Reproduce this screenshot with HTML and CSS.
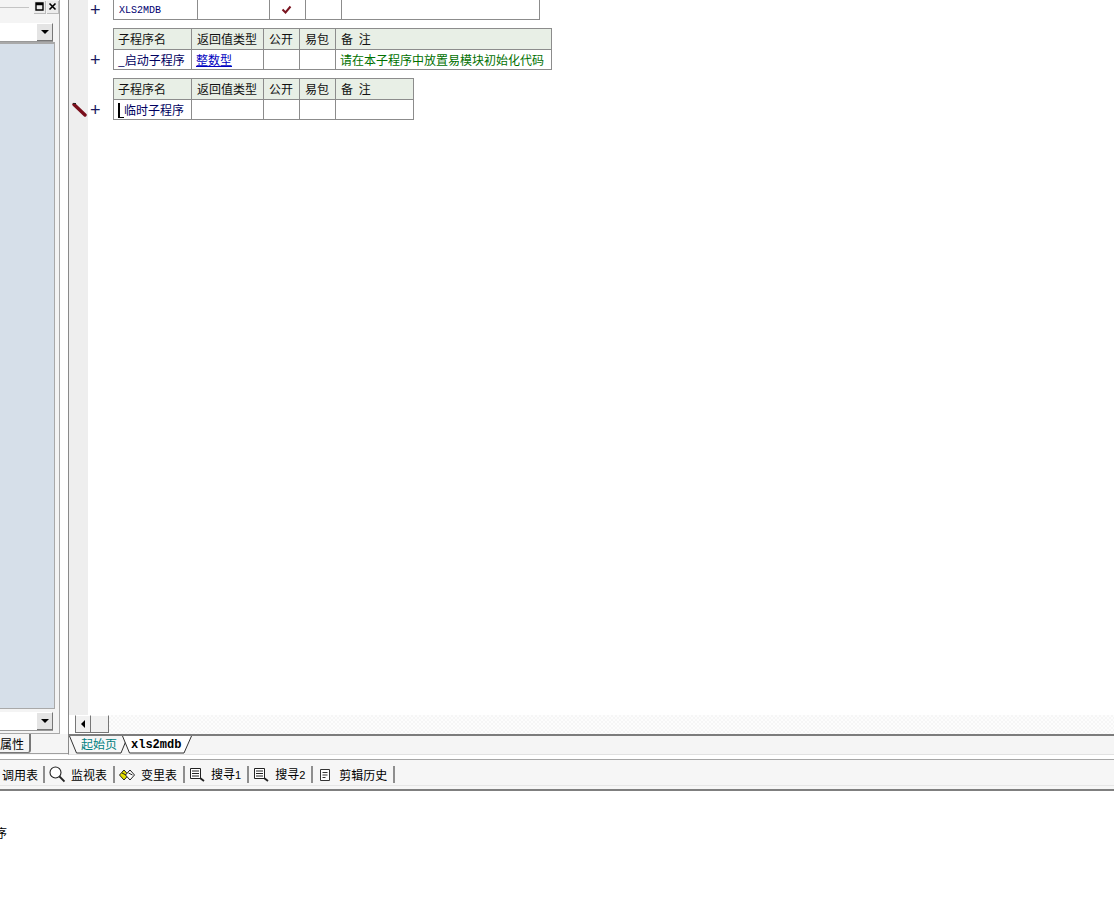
FILE: index.html
```html
<!DOCTYPE html>
<html lang="zh-CN">
<head>
  <meta charset="UTF-8">
  <title>易语言</title>
  <link rel="stylesheet" href="styles.css">
</head>
<body>
  <div class="main">
    <!-- left panel -->
    <div class="side">
      <div class="side-title">
        <span class="grip"></span>
        <span class="win-btn"><svg width="9" height="9" viewBox="0 0 9 9"><path d="M1 1h7v7H1z M1 2.500h7" fill="none" stroke="#000" stroke-width="1.400"/></svg></span>
        <span class="win-btn"><svg width="9" height="9" viewBox="0 0 9 9"><path d="M1.500 1.500l6 6M7.500 1.500l-6 6" fill="none" stroke="#000" stroke-width="1.600"/></svg></span>
      </div>
      <div class="combo top-combo"><span class="drop"><i class="arrow"></i></span></div>
      <div class="side-list"></div>
      <div class="combo bottom-combo"><span class="drop"><i class="arrow"></i></span></div>
    </div>

    <!-- editor -->
    <div class="editor">
      <div class="code">
        <div class="gutter">
          <div class="mark first-mark"><span class="plus">+</span></div>
          <div class="mark"><span class="plus">+</span></div>
          <div class="mark">
            <svg class="pencil" width="15" height="15" viewBox="0 0 15 15"><path d="M2 2.500L13 13" stroke="#7a0f1c" stroke-width="3.400" stroke-linecap="round"/><path d="M1 1.500l3 0" stroke="#222" stroke-width="1"/></svg>
            <span class="plus">+</span>
          </div>
        </div>
        <div class="subs">
          <table class="sub first-sub">
            <tr>
              <td class="c-name mono">XLS2MDB</td>
              <td class="c-type"></td>
              <td class="c-pub"><svg width="11" height="9" viewBox="0 0 11 9"><path d="M1.500 4.500l3 3 5-6" fill="none" stroke="#7a1420" stroke-width="2"/></svg></td>
              <td class="c-pkg"></td>
              <td class="c-note w1"></td>
            </tr>
          </table>
          <table class="sub">
            <tr class="head">
              <td class="c-name">子程序名</td>
              <td class="c-type">返回值类型</td>
              <td class="c-pub">公开</td>
              <td class="c-pkg">易包</td>
              <td class="c-note w2">备 注</td>
            </tr>
            <tr>
              <td class="name">_启动子程序</td>
              <td class="type">整数型</td>
              <td></td>
              <td></td>
              <td class="note">请在本子程序中放置易模块初始化代码</td>
            </tr>
          </table>
          <table class="sub">
            <tr class="head">
              <td class="c-name">子程序名</td>
              <td class="c-type">返回值类型</td>
              <td class="c-pub">公开</td>
              <td class="c-pkg">易包</td>
              <td class="c-note w3">备 注</td>
            </tr>
            <tr>
              <td class="name"><span class="caret"></span>临时子程序</td>
              <td></td>
              <td></td>
              <td></td>
              <td></td>
            </tr>
          </table>
        </div>
      </div>
      <div class="hscroll">
        <span class="sb-btn"><i class="arrow-left"></i></span>
        <span class="sb-thumb"></span>
        <span class="sb-track"></span>
      </div>
    </div>
  </div>

  <div class="strip">
    <div class="strip-left"><span class="side-tab">属性</span></div>
    <div class="strip-right">
      <svg class="doc-tabs" width="130" height="18" viewBox="0 0 130 18">
        <path d="M0.500 0L7.500 17H52L56.500 6" fill="#f8f8f8" stroke="#333"/>
        <path d="M53.500 0L60.500 17H115L122.500 0" fill="#fff" stroke="#333"/>
        <text x="12" y="12.500" class="tab-a">起始页</text>
        <text x="62" y="12" class="tab-b">xls2mdb</text>
      </svg>
    </div>
  </div>

  <div class="toolbar">
    <div class="tool first-tool"><span>调用表</span></div>
    <div class="tool">
      <svg width="16" height="17" viewBox="0 0 16 17"><circle cx="6.500" cy="6.500" r="5.500" fill="#fff" stroke="#222" stroke-width="1.100"/><path d="M10.500 10.500l5 5" stroke="#222" stroke-width="1.800"/></svg>
      <span>监视表</span>
    </div>
    <div class="tool">
      <svg width="16" height="14" viewBox="0 0 16 14"><path d="M5 2l4.500 5L5 12 .5 7z" fill="#e6e000" stroke="#222"/><path d="M11 2l4.500 5-4.500 5-4.500-5z" fill="#fff" stroke="#222"/><path d="M3 5l4 2M9.500 5l4 2" stroke="#222"/></svg>
      <span>变里表</span>
    </div>
    <div class="tool">
      <svg width="16" height="15" viewBox="0 0 16 15"><path d="M1.500 1.500h10v10h-10z" fill="#fff" stroke="#222"/><path d="M3 4h7M3 6.500h7M3 9h7" stroke="#222"/><path d="M11 11l4 3" stroke="#222" stroke-width="1.800"/></svg>
      <span>搜寻<em>1</em></span>
    </div>
    <div class="tool">
      <svg width="16" height="15" viewBox="0 0 16 15"><path d="M1.500 1.500h10v10h-10z" fill="#fff" stroke="#222"/><path d="M3 4h7M3 6.500h7M3 9h7" stroke="#222"/><path d="M11 11l4 3" stroke="#222" stroke-width="1.800"/></svg>
      <span>搜寻<em>2</em></span>
    </div>
    <div class="tool">
      <svg width="16" height="14" viewBox="-2 0 16 14"><path d="M1.500 1.500h9v11h-9z" fill="#fff" stroke="#333"/><path d="M3.500 4.500h5M3.500 7h5M3.500 9.500h3" stroke="#333"/></svg>
      <span>剪辑历史</span>
    </div>
  </div>

  <div class="output">
    <span class="out-line">序</span>
  </div>
</body>
</html>
```

FILE: styles.css
```css
html, body {
  margin: 0;
  padding: 0;
}
body {
  width: 1114px;
  height: 915px;
  overflow: hidden;
  background-color: #ffffff;
  font-family: "Noto Sans CJK SC", "Liberation Sans", sans-serif;
  font-size: 12px;
  color: #000;
}

.main {
  display: flex;
  height: 734px;
}

/* left panel */
.side {
  width: 60px;
  flex: none;
  display: flex;
  flex-direction: column;
  background-color: #f4f4f4;
  border-right: 1px solid #a8a8a8;
  border-bottom: 1px solid #a8a8a8;
  box-sizing: border-box;
}
.side-title {
  height: 14px;
  display: flex;
  align-items: center;
  gap: 1px;
}
.grip {
  flex: 1;
  height: 1px;
  margin-right: 4px;
  background-color: #c4c4c4;
}
.win-btn {
  width: 11px;
  height: 12px;
  display: flex;
  align-items: center;
  justify-content: center;
  background-color: #ececec;
  border-right: 1px solid #bbb;
  border-bottom: 1px solid #bbb;
}
.combo {
  height: 18px;
  width: 53px;
  background-color: #fff;
  display: flex;
  justify-content: flex-end;
  border-bottom: 1px solid #999;
}
.top-combo {
  margin-top: 9px;
}
.bottom-combo {
  margin-top: 3px;
  margin-bottom: 2px;
}
.drop {
  width: 15px;
  height: 16px;
  display: flex;
  align-items: center;
  justify-content: center;
  background-color: #e4e4e4;
  border-right: 1px solid #777;
  border-bottom: 1px solid #777;
  border-top: 1px solid #fff;
}
.arrow {
  border-left: 4px solid transparent;
  border-right: 4px solid transparent;
  border-top: 4px solid #000;
}
.side-list {
  width: 55px;
  flex: 1;
  background-color: #d6dfe9;
  border: 1px solid #a9a9a9;
  border-left: none;
  border-top-width: 2px;
  box-sizing: border-box;
}

/* editor */
.editor {
  flex: 1;
  display: flex;
  flex-direction: column;
  min-width: 0;
  margin-left: 8px;
  border-left: 1px solid #8a8a8a;
}
.code {
  flex: 1;
  display: flex;
  min-height: 0;
}
.gutter {
  width: 19px;
  flex: none;
  background-color: #eeeeee;
  position: relative;
}
.mark {
  height: 20px;
  margin-top: 30px;
  line-height: 19px;
  position: relative;
}
.first-mark {
  margin-top: 0;
}
.plus {
  position: absolute;
  left: 21px;
  top: 1px;
  font-family: "Liberation Sans", sans-serif;
  font-size: 18px;
  line-height: 19px;
  color: #1a1a60;
}
.pencil {
  position: absolute;
  left: 3px;
  top: 2px;
}
.subs {
  padding-left: 25px;
  display: flex;
  flex-direction: column;
  gap: 8px;
}

table.sub {
  border-collapse: separate;
  border-spacing: 0;
  table-layout: fixed;
  width: min-content;
  border-top: 1px solid #8c8c8c;
  border-left: 1px solid #8c8c8c;
}
.sub td {
  border-right: 1px solid #8c8c8c;
  border-bottom: 1px solid #8c8c8c;
  height: 20px;
  padding: 0 0 0 5px;
  line-height: 19px;
  white-space: nowrap;
  overflow: hidden;
  box-sizing: border-box;
}
table.first-sub {
  border-top: none;
}
.head td {
  background-color: #e8efe6;
  height: 21px;
  line-height: 20px;
  color: #111;
}
.c-name { width: 78px; min-width: 78px; }
.c-type { width: 72px; min-width: 72px; }
.c-pub { width: 36px; min-width: 36px; }
.c-pkg { width: 36px; min-width: 36px; }
.c-note { word-spacing: 3px; }
.sub .head .c-name, .sub .name, .sub .type, .sub .note {
  padding-left: 4px;
}
.first-sub .c-name { width: 84px; min-width: 84px; }
.first-sub .c-pub svg { display: block; margin-left: 6px; }
.w1 { width: 198px; min-width: 198px; }
.w2 { width: 216px; min-width: 216px; }
.w3 { width: 78px; min-width: 78px; }
.first-sub td {
  line-height: 16px;
}
.first-sub .mono {
  font-family: "Liberation Mono", monospace;
  font-size: 10px;
  color: #000070;
  padding-top: 3px;
}
.name { color: #000060; }
.type {
  color: #0000c0;
  text-decoration: underline;
}
.note { color: #007000; }
.caret {
  display: inline-block;
  width: 6px;
  height: 15px;
  vertical-align: -3px;
  box-sizing: border-box;
  border-left: 2px solid #000;
  border-bottom: 1px solid #000;
}

.hscroll {
  height: 19px;
  display: flex;
  padding-left: 6px;
}
.sb-btn, .sb-thumb {
  width: 16px;
  height: 18px;
  box-sizing: border-box;
  flex: none;
  display: flex;
  align-items: center;
  justify-content: center;
  background-color: #f1f1f1;
  border-top: 1px solid #fff;
  border-left: 1px solid #777;
  border-right: 1px solid #777;
  border-bottom: 1px solid #777;
}
.sb-thumb {
  width: 18px;
  border-left: none;
}
.arrow-left {
  border-top: 4px solid transparent;
  border-bottom: 4px solid transparent;
  border-right: 4px solid #000;
}
.sb-track {
  flex: 1;
  background-color: #fdfdfd;
  background-image: repeating-conic-gradient(#f6f6f6 0 25%, #fdfdfd 0 50%);
  background-size: 4px 4px;
}

/* document tabs */
.strip {
  height: 21px;
  display: flex;
  align-items: flex-start;
  background-color: #f5f5f5;
}
.strip-left {
  width: 68px;
  flex: none;
  height: 19px;
  border-bottom: 1px solid #a0a0a0;
}
.side-tab {
  display: block;
  width: 31px;
  height: 19px;
  line-height: 20px;
  background-color: #f5f5f5;
  border-right: 2px solid #777;
  border-bottom: 1px solid #777;
  border-radius: 0 0 3px 0;
  box-sizing: border-box;
}
.strip-right {
  flex: 1;
  height: 18px;
  border-top: 2px solid #7c7c7c;
  border-bottom: 1px solid #e2e2e2;
  border-left: 1px solid #8a8a8a;
}
.doc-tabs {
  display: block;
}
.tab-a {
  font-size: 12px;
  fill: #008080;
}
.tab-b {
  font-family: "Liberation Mono", monospace;
  font-size: 12px;
  font-weight: bold;
  fill: #000;
}

/* bottom toolbar */
.toolbar {
  height: 29px;
  margin-top: 4px;
  display: flex;
  align-items: center;
  background-color: #f6f6f6;
  background-image: linear-gradient(transparent 25px, #e6e6e6 25px, #e6e6e6 26px, transparent 26px);
  border-top: 1px solid #a6a6a6;
  border-bottom: 2px solid #7f7f7f;
}
.tool {
  height: 17px;
  display: flex;
  align-items: center;
  gap: 6px;
  padding: 0 6px 0 4px;
  border-right: 2px solid #8e8e8e;
  line-height: 17px;
}
.first-tool {
  padding: 0 5px 0 2px;
}
.tool svg {
  flex: none;
}
.tool em {
  font-family: "Liberation Sans", sans-serif;
  font-size: 11px;
  font-style: normal;
}

.output {
  padding-top: 33px;
  line-height: 17px;
}
.out-line {
  display: block;
  margin-left: -5px;
}
```
